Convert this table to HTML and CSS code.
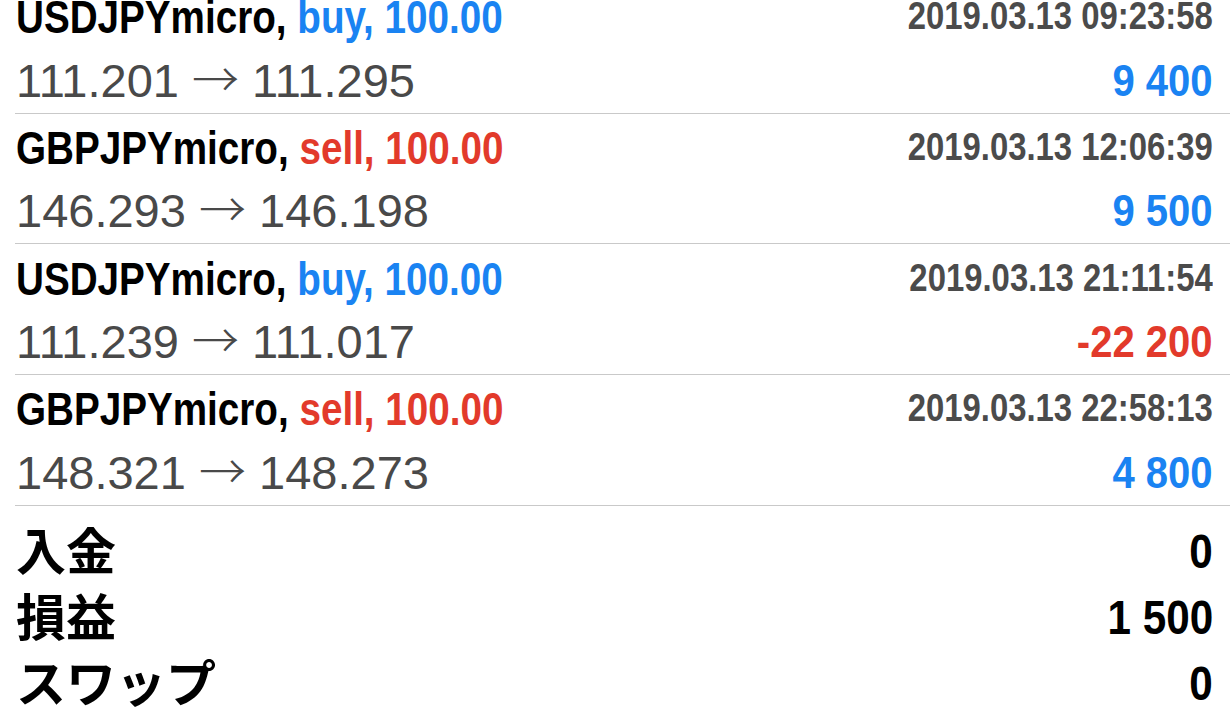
FILE: index.html
```html
<!DOCTYPE html>
<html lang="ja">
<head>
<meta charset="utf-8">
<title>History</title>
<link rel="stylesheet" href="styles.css">
</head>
<body>
<div class="screen">
  <ul class="deals">
    <li class="deal">
      <div class="line line-top">
        <span class="title">USDJPYmicro, <span class="buy">buy, 100.00</span></span>
        <span class="time">2019.03.13 09:23:58</span>
      </div>
      <div class="line line-bottom">
        <span class="prices">111.201 <span class="arrow">→</span> 111.295</span>
        <span class="profit pos">9 400</span>
      </div>
    </li>
    <li class="deal">
      <div class="line line-top">
        <span class="title">GBPJPYmicro, <span class="sell">sell, 100.00</span></span>
        <span class="time">2019.03.13 12:06:39</span>
      </div>
      <div class="line line-bottom">
        <span class="prices">146.293 <span class="arrow">→</span> 146.198</span>
        <span class="profit pos">9 500</span>
      </div>
    </li>
    <li class="deal">
      <div class="line line-top">
        <span class="title">USDJPYmicro, <span class="buy">buy, 100.00</span></span>
        <span class="time">2019.03.13 21:11:54</span>
      </div>
      <div class="line line-bottom">
        <span class="prices">111.239 <span class="arrow">→</span> 111.017</span>
        <span class="profit neg">-22 200</span>
      </div>
    </li>
    <li class="deal">
      <div class="line line-top">
        <span class="title">GBPJPYmicro, <span class="sell">sell, 100.00</span></span>
        <span class="time">2019.03.13 22:58:13</span>
      </div>
      <div class="line line-bottom">
        <span class="prices">148.321 <span class="arrow">→</span> 148.273</span>
        <span class="profit pos">4 800</span>
      </div>
    </li>
  </ul>
  <div class="summary">
    <div class="sum-row"><span class="sum-label">入金</span><span class="sum-value">0</span></div>
    <div class="sum-row"><span class="sum-label">損益</span><span class="sum-value">1 500</span></div>
    <div class="sum-row"><span class="sum-label">スワップ</span><span class="sum-value">0</span></div>
  </div>
</div>
</body>
</html>
```
FILE: styles.css
```css
html, body {
  margin: 0;
  padding: 0;
  background: #ffffff;
}
body {
  width: 1230px;
  height: 716px;
  overflow: hidden;
  font-family: "Liberation Sans", Arial, sans-serif;
}
.screen {
  margin-top: -17px;
}
.deals {
  list-style: none;
  margin: 0;
  padding: 0;
}
.deal {
  margin-left: 15px;
  padding: 2px 17px 0 1px;
  height: 127.667px;
  border-bottom: 1px solid #c9c9c9;
  display: flex;
  flex-direction: column;
}
.line {
  height: 64px;
  display: flex;
  align-items: center;
  justify-content: space-between;
  white-space: nowrap;
}
.title {
  display: inline-block;
  font-family: "Liberation Sans", Arial, sans-serif;
  font-weight: 700;
  font-size: 47px;
  color: #000000;
  transform: scaleX(0.822);
  transform-origin: left center;
}
.buy { color: #1a83f2; }
.sell { color: #e23a2b; }
.time {
  display: inline-block;
  font-family: "Liberation Sans", Arial, sans-serif;
  font-weight: 700;
  font-size: 38px;
  color: #4b4b4b;
  transform: scaleX(0.865);
  transform-origin: right center;
}
.prices {
  display: block;
  font-family: "Liberation Sans", Arial, sans-serif;
  font-size: 47px;
  line-height: 54px;
  color: #494949;
}
.arrow {
  font-family: "Noto Sans CJK JP", "DejaVu Sans", sans-serif;
  font-weight: 300;
  line-height: 0;
}
.profit {
  display: inline-block;
  font-family: "Liberation Sans", Arial, sans-serif;
  font-weight: 700;
  font-size: 45px;
  transform: scaleX(0.89);
  transform-origin: right center;
}
.pos { color: #1a83f2; }
.neg { color: #e23a2b; }
.summary {
  padding: 13px 17px 0 16px;
}
.sum-row {
  height: 66px;
  display: flex;
  align-items: center;
  justify-content: space-between;
}
.sum-label {
  font-family: "Noto Sans CJK JP", sans-serif;
  font-weight: 700;
  font-size: 50px;
  line-height: 66px;
  padding-bottom: 8px;
  color: #000000;
}
.sum-value {
  display: inline-block;
  font-family: "Liberation Sans", Arial, sans-serif;
  font-weight: 700;
  font-size: 48px;
  color: #000000;
  transform: scaleX(0.88);
  transform-origin: right center;
}
```
